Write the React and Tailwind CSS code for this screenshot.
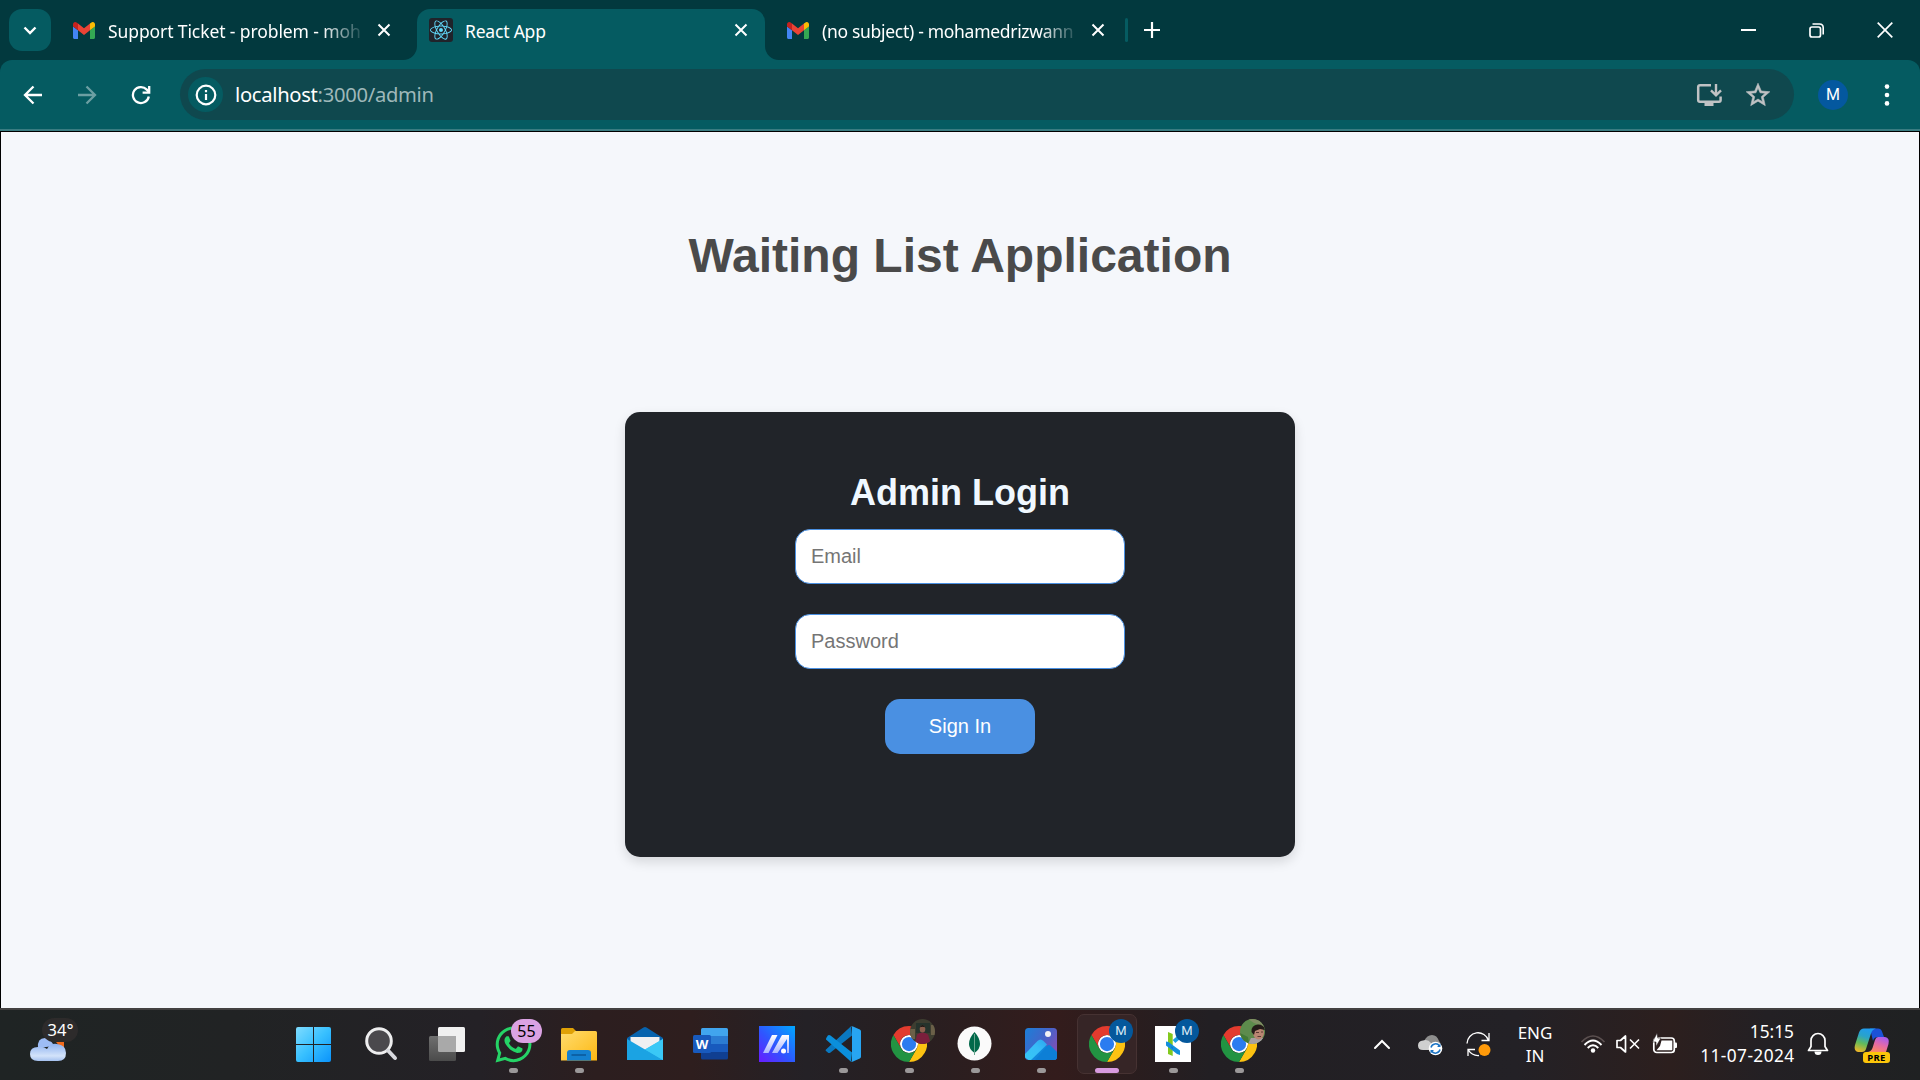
import React from "react";
import { FaReact, FaWhatsapp } from "react-icons/fa";

const UI = "font-['Noto_Sans','Open_Sans',sans-serif]";

function Gmail() {
  return (
    <svg width="22" height="17" viewBox="52 42 88 66" preserveAspectRatio="none" className="shrink-0">
      <path fill="#4285f4" d="M58 108h14V74L52 59v43c0 3.32 2.69 6 6 6" />
      <path fill="#34a853" d="M120 108h14c3.32 0 6-2.69 6-6V59l-20 15" />
      <path fill="#fbbc04" d="M120 48v26l20-15v-8c0-7.42-8.47-11.65-14.4-7.2" />
      <path fill="#ea4335" d="M72 74V48l24 18 24-18v26L96 92" />
      <path fill="#c5221f" d="M52 51v8l20 15V48l-5.6-4.2c-5.94-4.45-14.4-.22-14.4 7.2" />
    </svg>
  );
}

function Close() {
  return (
    <svg width="14" height="14" viewBox="0 0 14 14" className="shrink-0">
      <path d="M1.5 1.5 12.5 12.5M12.5 1.5 1.5 12.5" stroke="#fff" strokeWidth="2" />
    </svg>
  );
}

function Foot({ flip }) {
  return (
    <svg width="14" height="14" viewBox="0 0 14 14" className={flip ? "-scale-x-100" : ""}>
      <path d="M14 0V14H0A14 14 0 0 0 14 0Z" fill="#055b61" />
    </svg>
  );
}

function TabStrip() {
  return (
    <div className="flex h-[60px] bg-[#02393e] text-white">
      <div className="mt-[9px] ml-[9px] flex size-[42px] items-center justify-center rounded-[13px] bg-[#055b61]">
        <svg width="14" height="9" viewBox="0 0 14 9">
          <path d="M1.5 1.5 7 7 12.5 1.5" stroke="#fff" strokeWidth="2.4" fill="none" />
        </svg>
      </div>
      <div className="flex w-[352px] items-center pl-[22px]">
        <Gmail />
        <div className="ml-[13px] w-[252px] whitespace-nowrap pt-[2px] text-[17.5px] leading-[26px] tracking-[-0.1px] [mask-image:linear-gradient(to_right,#000_214px,transparent_258px)]">
          Support Ticket - problem - moh
        </div>
        <div className="ml-[17px]"><Close /></div>
      </div>
      <div className="flex w-[14px] items-end"><Foot /></div>
      <div className="mt-[9px] flex w-[348px] items-center rounded-t-[13px] bg-[#055b61] pb-[9px] pl-[12px]">
        <div className="flex size-[24px] items-center justify-center rounded-[3px] bg-[#20232a]">
          <FaReact size={22} color="#61dafb" />
        </div>
        <div className="ml-[12px] w-[269px] whitespace-nowrap pt-[2px] text-[17.5px] leading-[26px] tracking-[-0.2px]">React App</div>
        <Close />
      </div>
      <div className="flex w-[14px] items-end"><Foot flip /></div>
      <div className="flex items-center pl-[8px]">
        <Gmail />
        <div className="ml-[13px] w-[251px] whitespace-nowrap pt-[2px] text-[17.5px] leading-[26px] tracking-[-0.3px] [mask-image:linear-gradient(to_right,#000_218px,transparent_258px)]">
          (no subject) - mohamedrizwann
        </div>
        <div className="ml-[18px]"><Close /></div>
        <div className="ml-[20px] h-[24px] w-[3px] rounded-full bg-[#055b61]" />
        <svg width="18" height="18" viewBox="0 0 18 18" className="ml-[15px]">
          <path d="M9 1V17M1 9H17" stroke="#fff" strokeWidth="2.2" />
        </svg>
      </div>
      <div className="ml-auto flex items-center pr-[27px]">
        <svg width="15" height="15" viewBox="0 0 15 15">
          <path d="M0 7H15" stroke="#fff" strokeWidth="2" />
        </svg>
        <svg width="15" height="15" viewBox="0 0 15 15" className="ml-[53px]">
          <rect x="1" y="4" width="10.5" height="10" rx="2" stroke="#fff" strokeWidth="1.7" fill="none" />
          <path d="M3.5 1H10.5Q14.2 1 14.2 4.7V11.5" stroke="#fff" strokeWidth="1.6" fill="none" />
        </svg>
        <svg width="16" height="16" viewBox="0 0 16 16" className="ml-[53px]">
          <path d="M.7.7 15.3 15.3M15.3.7.7 15.3" stroke="#fff" strokeWidth="1.7" />
        </svg>
      </div>
    </div>
  );
}

function Toolbar() {
  return (
    <div className="bg-[#02393e]">
      <div className="flex h-[71px] items-center rounded-t-[12px] border-b-2 border-[#3a7c81] bg-[#055b61] text-white">
        <svg width="20" height="20" viewBox="0 0 20 20" className="ml-[23px]">
          <path d="M19 10H2.5M10.5 1.5 2 10 10.5 18.5" stroke="#fff" strokeWidth="2.3" fill="none" />
        </svg>
        <svg width="20" height="20" viewBox="0 0 20 20" className="ml-[34px]">
          <path d="M1 10H17.5M9.5 1.5 18 10 9.5 18.5" stroke="#6c9fa3" strokeWidth="2.3" fill="none" />
        </svg>
        <svg width="20" height="20" viewBox="0 0 20 20" className="ml-[34px]">
          <path d="M17.8 11.5A8 8 0 1 1 15.8 4.6L18 7" stroke="#fff" strokeWidth="2.3" fill="none" />
          <path d="M18.2 1V7.6H11.6" stroke="#fff" strokeWidth="2.3" fill="none" />
        </svg>
        <div className="ml-[29px] flex h-[51px] w-[1614px] items-center rounded-full bg-[#0f484e]">
          <div className="ml-[8px] flex size-[35px] items-center justify-center rounded-full bg-[#055b61]">
            <svg width="22" height="22" viewBox="0 0 22 22">
              <circle cx="11" cy="11" r="9.3" stroke="#fff" strokeWidth="2.2" fill="none" />
              <path d="M11 10V16M11 6V8.2" stroke="#fff" strokeWidth="2.2" />
            </svg>
          </div>
          <div className="ml-[12px] pb-[2px] text-[20.2px] leading-[28px] tracking-[-0.3px] text-[#9fb8ba]">
            <span className="text-white">localhost</span>:3000/admin
          </div>
          <svg width="26" height="24" viewBox="0 0 26 24" className="ml-auto">
            <path d="M15 2.2H4Q2.2 2.2 2.2 4V17Q2.2 18.8 4 18.8H23Q24.6 18.8 24.6 17V13.5" stroke="#c0c2c4" strokeWidth="2.5" fill="none" />
            <path d="M8.5 19H17.5V23H8.5Z" fill="#c0c2c4" />
            <path d="M20 1V12M15 7.3 20 12.3 25 7.3" stroke="#c0c2c4" strokeWidth="2.4" fill="none" />
          </svg>
          <svg width="26" height="26" viewBox="1 1 22 22" className="mr-[23px] ml-[23px]">
            <path d="m22 9.240-7.190-.620L12 2 9.190 8.630 2 9.240l5.460 4.730L5.820 21 12 17.270 18.180 21l-1.630-7.030zM12 15.400l-3.760 2.270 1-4.280-3.320-2.880 4.380-.380L12 6.100l1.710 4.040 4.380.380-3.320 2.880 1 4.280z" fill="#c0c2c4" stroke="#c0c2c4" strokeWidth=".5" />
          </svg>
        </div>
        <div className="ml-[24px] flex size-[30px] items-center justify-center rounded-full bg-[#04589f] font-['Roboto',sans-serif] text-[16px]">M</div>
        <svg width="6" height="22" viewBox="0 0 6 22" className="ml-[36px]">
          <circle cx="3" cy="2.6" r="2.3" fill="#fff" />
          <circle cx="3" cy="11" r="2.3" fill="#fff" />
          <circle cx="3" cy="19.4" r="2.3" fill="#fff" />
        </svg>
      </div>
    </div>
  );
}

function Page() {
  return (
    <main className="flex h-[877px] flex-col items-center border-x border-t border-black bg-[#f5f7fb] font-['Liberation_Sans',Arial,sans-serif]">
      <h1 className="mt-[95px] text-[48px] leading-[58px] font-bold text-[#4a4a4a]">Waiting List Application</h1>
      <form className="mt-[127px] flex h-[445px] w-[670px] flex-col items-center rounded-[15px] bg-[#212429] shadow-[0_5px_12px_rgba(0,0,0,0.13)]">
        <h2 className="mt-[59px] text-[36px] leading-[43px] font-bold text-[#f0f8ff]">Admin Login</h2>
        <input placeholder="Email" className="mt-[15px] h-[55px] w-[330px] rounded-[15px] border border-[#4a90e2] bg-white px-[15px] text-[20px] placeholder:text-[#757575]" />
        <input placeholder="Password" type="password" className="mt-[30px] h-[55px] w-[330px] rounded-[15px] border border-[#4a90e2] bg-white px-[15px] text-[20px] placeholder:text-[#757575]" />
        <button type="button" className="mt-[30px] h-[55px] w-[150px] rounded-[15px] bg-[#4a90e2] pb-[2px] text-[20px] text-white">Sign In</button>
      </form>
    </main>
  );
}

function Chrome() {
  return (
    <svg width="36" height="36" viewBox="0 0 48 48">
      <circle cx="24" cy="24" r="12" fill="#fff" />
      <path d="M24,12H44.781a23.994,23.994,0,0,0-41.564.003L13.608,30l.009-.002A11.985,11.985,0,0,1,24,12Z" fill="#e33b2e" />
      <path d="M34.391,30.003,24.001,48A23.994,23.994,0,0,0,44.780,12.003H23.999l-.003.009A11.985,11.985,0,0,1,34.391,30.003Z" fill="#fcc212" />
      <path d="M13.609,30.003,3.218,12.006A23.994,23.994,0,0,0,24.003,48L34.393,30.003l-.007-.007a11.985,11.985,0,0,1-20.778.007Z" fill="#229342" />
      <circle cx="24" cy="24" r="9.5" fill="#2b7cf0" />
    </svg>
  );
}

function BadgeM() {
  return (
    <span className="absolute top-[-7px] left-[20px] flex size-[24px] items-center justify-center rounded-full bg-[#04589c] font-['Roboto',sans-serif] text-[13px] text-[#d8e8f6]">M</span>
  );
}

function PhotoRed() {
  return (
    <svg width="25" height="25" viewBox="0 0 25 25" className="absolute top-[-7px] left-[19px]">
      <defs><clipPath id="pr"><circle cx="12.5" cy="12.5" r="12.5" /></clipPath></defs>
      <g clipPath="url(#pr)">
        <rect width="25" height="25" fill="#3d3d30" />
        <path d="M6 4H20V14H6Z" fill="#26332c" />
        <path d="M0 10H5V20H0ZM21 6H25V16H21Z" fill="#6b6048" />
        <path d="M5 25 7 15.500Q12.500 11.500 18 15.500L21 25Z" fill="#7b1f3c" />
        <ellipse cx="12.5" cy="10" rx="2.8" ry="3.6" fill="#8c5f4d" />
        <path d="M9.500 8.500Q12.500 3.500 15.500 8.500Q12.500 7 9.500 8.500Z" fill="#1c1614" />
      </g>
    </svg>
  );
}

function PhotoGreen() {
  return (
    <svg width="25" height="25" viewBox="0 0 25 25" className="absolute top-[-7px] left-[19px]">
      <defs><clipPath id="pg"><circle cx="12.5" cy="12.5" r="12.5" /></clipPath></defs>
      <g clipPath="url(#pg)">
        <rect width="25" height="25" fill="#5d8b4c" />
        <path d="M8 0H25V8L14 4Z" fill="#7f8d62" />
        <path d="M0 14 8 18 9 25H0Z" fill="#437a35" />
        <path d="M8 25 11 19 25 19V25Z" fill="#a6a0a2" />
        <ellipse cx="18.5" cy="14" rx="5.5" ry="6.5" fill="#b98572" />
        <path d="M11.500 13Q11 6 18 5.500Q24 5.500 25 11L20 10 15 12 14 16Z" fill="#241a18" />
        <path d="M16 13.500H19M21 13H23M17.500 17.500H21" stroke="#5b3a33" strokeWidth="1" />
      </g>
    </svg>
  );
}

function Slot({ dot, active, children }) {
  return (
    <div className="flex w-[66px] justify-center pt-[4px]">
      <div className={active ? "flex h-[60px] w-[60px] flex-col items-center rounded-[7px] border border-[#463232] bg-[#362526] pt-[11px]" : "flex h-[60px] w-[60px] flex-col items-center pt-[12px]"}>
        <div className="relative flex size-[36px] items-center justify-center">{children}</div>
        {dot && <div className={active ? "mt-[6px] h-[5px] w-[24px] rounded-full bg-[#d89be0]" : "mt-[6px] h-[5px] w-[9px] rounded-full bg-[#9b9899]"} />}
      </div>
    </div>
  );
}

function Apps() {
  return (
    <div className="ml-[204px] flex">
      <Slot>
        <svg width="35" height="35" viewBox="0 0 35 35" className="-ml-[3px]">
          <defs><linearGradient id="win" x1="0" y1="0" x2="1" y2="1" gradientUnits="objectBoundingBox"><stop stopColor="#7fdcff" /><stop offset=".5" stopColor="#38c0ff" /><stop offset="1" stopColor="#0a93fb" /></linearGradient></defs>
          <path d="M2 0H17V17H0V2Q0 0 2 0ZM18 0H33Q35 0 35 2V17H18ZM0 18H17V35H2Q0 35 0 33ZM18 18H35V33Q35 35 33 35H18Z" fill="url(#win)" />
        </svg>
      </Slot>
      <Slot>
        <svg width="34" height="36" viewBox="0 0 34 36">
          <circle cx="15" cy="15" r="12.3" fill="#4b494d" stroke="#eeeeef" strokeWidth="3" />
          <path d="M24 24.500 31 32" stroke="#d9dadf" strokeWidth="4" strokeLinecap="round" />
        </svg>
      </Slot>
      <Slot>
        <svg width="36" height="36" viewBox="0 0 36 36">
          <defs><linearGradient id="tv" x1="0" y1="0" x2="0" y2="1"><stop stopColor="#6f6f6f" /><stop offset="1" stopColor="#4b4b4b" /></linearGradient></defs>
          <rect x="9" y="1" width="27" height="25" rx="1.5" fill="#f0f0f0" />
          <rect x="0" y="10" width="27" height="25" rx="1.5" fill="url(#tv)" />
          <path d="M9 10H27V26H10.500Q9 26 9 24.500Z" fill="#a9a9a9" />
        </svg>
      </Slot>
      <Slot dot>
        <FaWhatsapp size={41} color="#25d366" className="shrink-0" />
        <span className="absolute top-[-7px] left-[16px] flex h-[24px] w-[31px] items-center justify-center rounded-full bg-[#dba2e3] text-[16px] text-black">55</span>
      </Slot>
      <Slot dot>
        <svg width="36" height="36" viewBox="0 0 36 36">
          <defs><linearGradient id="fo" x1="0" y1="0" x2="1" y2="1"><stop stopColor="#ffdc6e" /><stop offset="1" stopColor="#fdb813" /></linearGradient></defs>
          <path d="M1.500 2H12L15 5V9H0V3.500Q0 2 1.500 2Z" fill="#e0a106" />
          <path d="M14 5H34.500Q36 5 36 6.500V34.500H0V8H11Z" fill="url(#fo)" />
          <path d="M6 34.500V27Q6 24 9 24H27Q30 24 30 27V34.500Z" fill="#1480cf" />
          <path d="M10.500 29H25" stroke="#0b5a9c" strokeWidth="1.6" />
        </svg>
      </Slot>
      <Slot>
        <svg width="36" height="36" viewBox="0 0 36 36">
          <path d="M0 12 16.500 1.500Q18 .6 19.500 1.500L36 12V20H0Z" fill="#0763ae" />
          <path d="M3.500 11H32.500V18L18 26 3.500 18Z" fill="#f0f0f2" />
          <path d="M36 13V34H0Z" fill="#35bdf1" />
          <path d="M0 13 36 34H0Z" fill="#1ba3e3" />
          <path d="M18 23.500 36 13V34Z" fill="#3ac8f6" />
        </svg>
      </Slot>
      <Slot>
        <div className="relative size-[36px]">
          <svg width="36" height="36" viewBox="0 0 36 36">
            <path d="M8 3.500Q8 2 9.500 2H33.500Q35 2 35 3.500V11H8Z" fill="#41a5ee" />
            <path d="M8 10H35V18H8Z" fill="#2b7cd3" />
            <path d="M8 18H35V26H8Z" fill="#185abd" />
            <path d="M8 26H35V32Q35 33.500 33.500 33.500H9.500Q8 33.500 8 32Z" fill="#103f91" />
            <rect x="0" y="9" width="18" height="18" rx="1.5" fill="#185abd" />
          </svg>
          <span className="absolute top-[9px] left-0 w-[18px] text-center text-[13px] leading-[18px] font-bold text-white">W</span>
        </div>
      </Slot>
      <Slot>
        <svg width="36" height="36" viewBox="0 0 36 36">
          <defs>
            <linearGradient id="as" x1="0" y1="1" x2="1" y2="0"><stop stopColor="#6a1cff" /><stop offset=".45" stopColor="#2f55ff" /><stop offset="1" stopColor="#00a8ff" /></linearGradient>
            <linearGradient id="af" x1="0" y1="0" x2="0" y2="1"><stop stopColor="#fff" /><stop offset="1" stopColor="#a9b4ff" /></linearGradient>
          </defs>
          <rect width="36" height="36" fill="url(#as)" />
          <path d="M13 9H18.500L9.500 27H4Z" fill="url(#af)" />
          <path d="M23 9H30V27H28V13L18.500 27H13Z" fill="url(#af)" />
          <circle cx="24.5" cy="25" r="2.5" fill="#fff" />
        </svg>
      </Slot>
      <Slot dot>
        <svg width="36" height="36" viewBox="0 0 36 36">
          <path d="M1 23.500 26 .3 27 9.500 5.500 26.500Q4 27.500 2.800 26.500L1 25Q0 24.300 1 23.500Z" fill="#0a78c0" />
          <path d="M1 12.500 2.800 9.500Q4 8.600 5.500 9.600L27 26.500 26 35.700 1 13.500Z" fill="#0b8fdb" />
          <path d="M26 .3Q27 0 28 .4L34.800 3.500Q36 4 36 5.300V30.700Q36 32 34.800 32.500L28 35.600Q26.700 36.100 26 35.400Q27 35.500 27 34V2Q27 .5 26 .3Z" fill="#27a5f2" />
        </svg>
      </Slot>
      <Slot dot><Chrome /><PhotoRed /></Slot>
      <Slot dot>
        <svg width="36" height="36" viewBox="0 0 36 36">
          <circle cx="17.5" cy="17.5" r="17" fill="#fafafa" />
          <path d="M17.500 6Q12 12 12 18Q12 23 17 26.500V29H18V26.500Q23 23 23 18Q23 12 17.500 6Z" fill="#00684a" />
          <path d="M17.500 8V29" stroke="#65a48c" strokeWidth="1" />
        </svg>
      </Slot>
      <Slot dot>
        <svg width="32" height="32" viewBox="0 0 32 32">
          <defs>
            <linearGradient id="ph" x1="0" y1="0" x2="1" y2=".6"><stop stopColor="#1b7fd8" /><stop offset=".6" stopColor="#4663c8" /><stop offset="1" stopColor="#7d50b8" /></linearGradient>
            <linearGradient id="pm" x1="0" y1="1" x2="1" y2="0"><stop stopColor="#35c8f5" /><stop offset=".6" stopColor="#38bdf8" /><stop offset="1" stopColor="#2aa5ee" /></linearGradient>
            <clipPath id="pc"><rect width="32" height="32" rx="3.5" /></clipPath>
          </defs>
          <g clipPath="url(#pc)">
            <rect width="32" height="32" fill="url(#ph)" />
            <path d="M15 12.500 32 28V32H4Z" fill="#1187dc" />
            <path d="M10 32 22 18Q24 16 26.500 18.500L32 24V32Z" fill="#0d7fd6" />
            <path d="M-2 28 12.500 13Q15.500 10 18.500 13L22 16.500 5 33Z" fill="url(#pm)" />
          </g>
          <circle cx="23" cy="6" r="3" fill="#f2f2f4" />
        </svg>
      </Slot>
      <Slot dot active><Chrome /><BadgeM /></Slot>
      <Slot dot>
        <svg width="36" height="36" viewBox="0 0 36 36">
          <rect width="36" height="36" fill="#fff" />
          <path d="M19 15.500 26 9.500" stroke="#1ba0e2" strokeWidth="4" />
          <path d="M13 6 17.700 8V30L13 28Z" fill="#82c91e" />
          <path d="M11 15.500 13.500 16 25 24.500V29L22 28 11 19.500Z" fill="#128fdd" />
          <path d="M15.500 20 17.700 21.500V23Z" fill="#0a6fb5" />
        </svg>
        <BadgeM />
      </Slot>
      <Slot dot><Chrome /><PhotoGreen /></Slot>
    </div>
  );
}

function Tray() {
  return (
    <div className="ml-auto flex h-[68px] items-center pr-[30px]">
      <svg width="18" height="12" viewBox="0 0 18 12">
        <path d="M2 10 9 3 16 10" stroke="#fff" strokeWidth="2" fill="none" strokeLinecap="round" />
      </svg>
      <svg width="26" height="22" viewBox="0 0 26 22" className="mt-[2px] ml-[26px]">
        <path d="M7 7Q10 1 15 1Q20 1 22 7Q24 9 24 12L14 14Z" fill="#8e8e8e" />
        <path d="M6 16Q1 16 1 11.500Q1 7 6 6.500Q11 5 14 9L16 16Z" fill="#cfcfcf" />
        <circle cx="18.5" cy="14.5" r="6.8" fill="#fff" />
        <path d="M14 13.500A4.700 4.700 0 0 1 22.500 12M23 15.500A4.700 4.700 0 0 1 14.500 17" stroke="#1a73c4" strokeWidth="1.5" fill="none" />
        <path d="M23.500 9.500V13H20ZM13.500 19.500V16H17Z" fill="#1a73c4" />
      </svg>
      <svg width="26" height="26" viewBox="0 0 26 26" className="ml-[22px]">
        <path d="M2 12.500A11 11 0 0 1 23.500 9.500M24 2V9.500H16.500M3 25V18.500H10M3 18.500Q7 25 14 24.500" stroke="#fff" strokeWidth="1.3" fill="none" />
        <circle cx="19.500" cy="19" r="6" fill="#ff9a0a" />
      </svg>
      <div className="ml-[25px] w-[38px] text-center text-[17px] leading-[23px] text-white">ENG<br />IN</div>
      <svg width="26" height="20" viewBox="0 0 26 20" className="ml-[26px]">
        <path d="M1.500 8Q13-4 24.500 8" stroke="#5b5050" strokeWidth="1.7" fill="none" />
        <path d="M4.500 11Q13 2 21.500 11M7.700 14Q13 8.500 18.300 14" stroke="#fff" strokeWidth="1.9" fill="none" />
        <circle cx="13" cy="16.5" r="2.2" fill="#fff" />
      </svg>
      <svg width="26" height="20" viewBox="0 0 26 20" className="ml-[9px]">
        <path d="M2 6.500H5.500L10.500 2V18L5.500 13.500H2Z" stroke="#fff" strokeWidth="1.7" fill="none" strokeLinejoin="round" />
        <path d="M15 5.500 24 14.500M24 5.500 15 14.500" stroke="#fff" strokeWidth="1.6" />
      </svg>
      <svg width="26" height="22" viewBox="0 0 26 22" className="ml-[11px]">
        <rect x="1.8" y="5" width="20.5" height="14.5" rx="3" stroke="#fff" strokeWidth="1.7" fill="none" />
        <path d="M9.500 7.500H20.300V17.200H4.500L8 13Z" fill="#fff" />
        <path d="M22.500 9.500H24Q25 9.500 25 10.500V14Q25 15 24 15H22.500Z" fill="#fff" />
        <path d="M5 0 .5 9H4V13.500L9 5H5.800Z" fill="#fff" stroke="#261f20" strokeWidth=".6" />
      </svg>
      <div className="ml-[14px] w-[102px] text-right text-[17.3px] leading-[24px] whitespace-nowrap text-white">
        <div>15:15</div>
        <div className="-mr-[0.5px] tracking-[0.4px]">11-07-2024</div>
      </div>
      <svg width="22" height="24" viewBox="0 0 22 24" className="ml-[13px]">
        <path d="M1.500 18.500 4 14.500V8.500A7 7 0 0 1 18 8.500V14.500L20.500 18.500Z" stroke="#fff" strokeWidth="1.7" fill="none" strokeLinejoin="round" />
        <path d="M7.500 19.500A3.500 3.500 0 0 0 14.500 19.500Z" fill="#fff" />
      </svg>
      <div className="relative mt-[2px] ml-[25px] size-[36px]">
        <svg width="36" height="36" viewBox="0 0 36 36">
          <defs>
            <linearGradient id="ca" x1=".6" y1="0" x2=".3" y2="1"><stop stopColor="#1f9bf0" /><stop offset=".35" stopColor="#2aa3c8" /><stop offset=".65" stopColor="#63bb5a" /><stop offset="1" stopColor="#e9b52a" /></linearGradient>
            <linearGradient id="cb" x1=".8" y1="0" x2=".3" y2="1"><stop stopColor="#a45cf5" /><stop offset=".5" stopColor="#e46aa6" /><stop offset="1" stopColor="#ff8a5c" /></linearGradient>
          </defs>
          <path d="M16 1.500H24Q27 1.500 28 4.500L30 10H24Q20 10 19 14Z" fill="#1b52d8" />
          <path d="M10 1.500H22Q18 2.500 17 6.500L12 22Q11 25.500 7 25H4Q-.5 24 1 18L5 5.500Q6.500 1.500 10 1.500Z" fill="url(#ca)" />
          <path d="M24 10H31Q36 11 34.500 17L32 25H13Q17 25 18.500 21L21 13Q22 10 24 10Z" fill="url(#cb)" />
        </svg>
        <span className="absolute top-[25px] left-[9px] h-[11px] w-[27px] rounded-[3px] bg-[#fcc60a] text-center text-[9.5px] leading-[11px] font-bold tracking-[0.3px] text-black">PRE</span>
      </div>
    </div>
  );
}

function Taskbar() {
  return (
    <div className="flex h-[72px] border-t-2 border-[#434141] bg-[linear-gradient(to_right,#1f2424_0%,#212324_12%,#242126_25%,#2c1e1f_31%,#2e1e1e_36%,#242126_42%,#271f21_47%,#331c1c_55%,#2a1d1e_59%,#221f23_63%,#232126_79%,#2c1f1e_87%,#232024_92%,#1f2122_100%)]">
      <div className="relative ml-[30px] w-[48px]">
        <svg width="37" height="24" viewBox="0 0 37 24" className="mt-[28px]">
          <defs><linearGradient id="wc" x1="0" y1="0" x2="0" y2="1"><stop stopColor="#8fb2f0" /><stop offset=".7" stopColor="#d3e3fa" /><stop offset="1" stopColor="#a5c1ef" /></linearGradient></defs>
          <path d="M26 4H34V9H30Z" fill="#f26b1d" />
          <path d="M8 10Q7 0 15 0Q20 0 24 8Z" fill="#9dbcf5" />
          <path d="M8 23Q0 23 0 16Q0 9 8 9Q13 8 17 11Q20 5 27 6Q36 7 36 15Q36 23 28 23Z" fill="url(#wc)" />
        </svg>
        <span className="absolute top-[8px] left-[12px] flex h-[24px] w-[36px] items-center justify-center rounded-full bg-[#2d2b2b] pl-[1px] text-[16.5px] text-white">34°</span>
      </div>
      <Apps />
      <Tray />
    </div>
  );
}

export default function App() {
  return (
    <div className={`h-[1080px] w-[1920px] overflow-hidden ${UI}`}>
      <TabStrip />
      <Toolbar />
      <Page />
      <Taskbar />
    </div>
  );
}
